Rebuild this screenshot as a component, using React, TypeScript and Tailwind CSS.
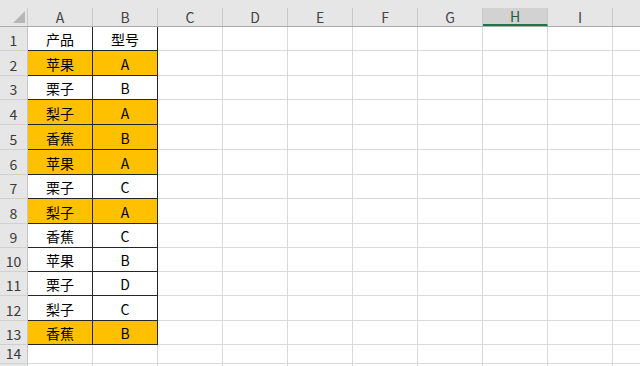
import React from 'react';

// 表格数据：[产品, 型号, 是否高亮]
const ROWS: [string, string, boolean][] = [
  ['产品', '型号', false],
  ['苹果', 'A', true],
  ['栗子', 'B', false],
  ['梨子', 'A', true],
  ['香蕉', 'B', true],
  ['苹果', 'A', true],
  ['栗子', 'C', false],
  ['梨子', 'A', true],
  ['香蕉', 'C', false],
  ['苹果', 'B', false],
  ['栗子', 'D', false],
  ['梨子', 'C', false],
  ['香蕉', 'B', true],
];

// 行高（含下边框）
const HEIGHTS = [24, 25, 24, 25, 25, 25, 24, 25, 24, 24, 24, 25, 24];

const COLS = ['A', 'B', 'C', 'D', 'E', 'F', 'G', 'H', 'I'];

const FONT = { fontFamily: '"Noto Sans CJK SC", "Liberation Sans", sans-serif' };

function RowHeader({ n, h }: { n?: number; h: number }) {
  return (
    <div
      className="w-[28px] shrink-0 bg-[#e6e6e6] border-r border-b border-r-[#c8c8c8] border-b-[#d0d0d0] flex items-end justify-center pb-[1px] text-[14px] leading-[18px] text-[#3a3a3a]"
      style={{ height: h }}
    >
      {n}
    </div>
  );
}

function EmptyCells({ h }: { h: number }) {
  return (
    <>
      {COLS.slice(2).map((c) => (
        <div key={c} className="w-[65px] shrink-0 border-r border-b border-[#d9d9d9]" style={{ height: h }} />
      ))}
      <div className="flex-1 border-b border-[#d9d9d9]" style={{ height: h }} />
    </>
  );
}

export default function App() {
  return (
    <div className="w-[640px] h-[366px] overflow-hidden bg-white text-black" style={FONT}>
      {/* 列标题 */}
      <div className="flex h-[27px] bg-[#e6e6e6] border-b border-[#ababab]">
        <div className="w-[28px] shrink-0 border-r border-[#c8c8c8] relative mt-[8px]">
          <svg className="absolute left-[13px] top-[3px]" width="12" height="12" viewBox="0 0 12 12">
            <polygon points="12,0 12,12 0,12" fill="#b7b7b7" />
          </svg>
        </div>
        {COLS.map((c) =>
          c === 'H' ? (
            <div
              key={c}
              className="w-[65px] shrink-0 mt-[8px] bg-[#d2d2d2] border-r border-[#c8c8c8] border-b-2 border-b-[#217346] flex items-center justify-center text-[14px] leading-[16px] text-[#235c3a]"
            >
              {c}
            </div>
          ) : (
            <div
              key={c}
              className="w-[65px] shrink-0 mt-[8px] border-r border-[#c8c8c8] flex items-center justify-center text-[14px] leading-[16px] text-[#444]"
            >
              {c}
            </div>
          )
        )}
        <div className="flex-1" />
      </div>

      {/* 数据行 */}
      {ROWS.map(([name, model, hl], i) => {
        const h = HEIGHTS[i];
        const fill = hl ? 'bg-[#ffc000]' : 'bg-white';
        return (
          <div key={i} className="flex">
            <RowHeader n={i + 1} h={h} />
            <div
              className={`w-[65px] shrink-0 border-r border-b border-[#262626] ${fill} flex items-end justify-center pb-[2px] text-[14px] leading-[18px]`}
              style={{ height: h }}
            >
              {name}
            </div>
            <div
              className={`w-[65px] shrink-0 border-r border-b border-[#262626] ${fill} flex items-end justify-center pb-[2px] text-[14px] leading-[18px]`}
              style={{ height: h }}
            >
              {model}
            </div>
            <EmptyCells h={h} />
          </div>
        );
      })}

      {/* 空行 */}
      {[19, 20].map((h, i) => (
        <div key={i} className="flex">
          <RowHeader n={i === 0 ? 14 : undefined} h={h} />
          <div className="w-[65px] shrink-0 border-r border-b border-[#d9d9d9]" style={{ height: h }} />
          <div className="w-[65px] shrink-0 border-r border-b border-[#d9d9d9]" style={{ height: h }} />
          <EmptyCells h={h} />
        </div>
      ))}
    </div>
  );
}
